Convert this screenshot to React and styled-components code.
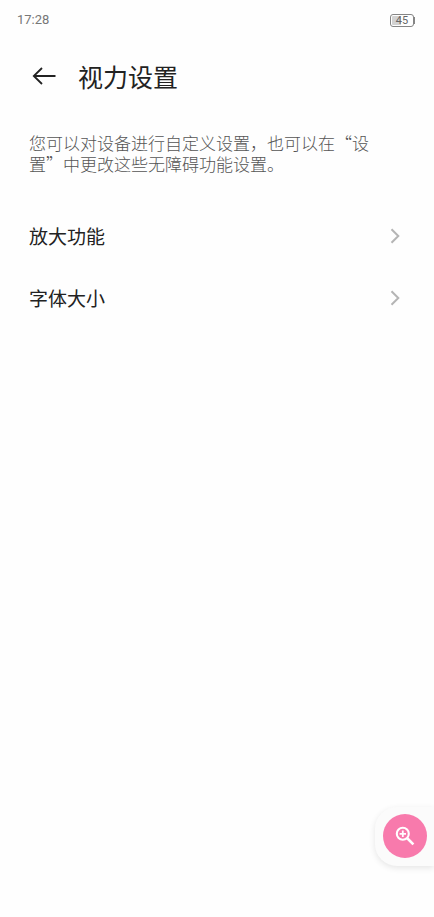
import React from "react";
import styled, {createGlobalStyle} from "styled-components";

const GlobalStyle = createGlobalStyle`
  * {
    box-sizing: border-box;
  }

  body {
    margin: 0;
    background: #fefefe;
    color: #222222;
    font-family: "Noto Sans CJK SC", sans-serif;
  }
`;

const Page = styled.div`
  min-height: 100vh;
  background: #fefefe;
`;

const StatusBar = styled.div`
  display: flex;
  justify-content: space-between;
  align-items: center;
  height: 40px;
  padding: 0 19px 0 17px;
`;

const Time = styled.time`
  font-family: Roboto, sans-serif;
  font-size: 13px;
  line-height: 20px;
  font-weight: 400;
  color: #777777;
`;

const Battery = styled.div`
  display: flex;
  align-items: center;
`;

const BatteryCell = styled.div`
  display: flex;
  justify-content: center;
  align-items: center;
  width: 24px;
  height: 13px;
  border: 1px solid #858585;
  border-radius: 3px;
  background: linear-gradient(90deg, #d2d2d2 45%, transparent 45%) content-box;
  padding: 1px;
  font-family: Roboto, sans-serif;
  font-size: 11px;
  line-height: 11px;
  color: #666666;
`;

const BatteryTip = styled.div`
  width: 1px;
  height: 7px;
  background: #858585;
`;

const Header = styled.header`
  display: flex;
  align-items: center;
  gap: 22px;
  height: 72px;
  padding: 0 32px;
`;

const BackButton = styled.button`
  display: flex;
  padding: 0;
  border: none;
  background: none;
  color: #222222;
  cursor: pointer;
`;

const Title = styled.h1`
  margin: 0;
  font-size: 25px;
  line-height: 36px;
  font-weight: 400;
`;

const Description = styled.p`
  margin: 0;
  padding: 20px 50px 31px 29px;
  font-size: 17px;
  line-height: 21px;
  font-weight: 300;
  color: #555555;
`;

const SettingsList = styled.nav`
  display: flex;
  flex-direction: column;
`;

const SettingsRow = styled.a`
  display: flex;
  justify-content: space-between;
  align-items: center;
  height: 62px;
  padding: 0 34px 0 29px;
  font-size: 19px;
  line-height: 28px;
  color: #222222;
  text-decoration: none;
`;

const ZoomDock = styled.div`
  position: fixed;
  right: 0;
  bottom: 51px;
  padding: 7px 7px 8px 8px;
  border-radius: 22px 0 0 22px;
  background: #fbfbfb;
  box-shadow: 0 2px 6px rgba(0, 0, 0, 0.1);
`;

const ZoomButton = styled.button`
  display: flex;
  justify-content: center;
  align-items: center;
  width: 44px;
  height: 44px;
  padding: 0;
  border: none;
  border-radius: 50%;
  background: #f87aac;
  cursor: pointer;
`;

const BackIcon = () => (
    <svg width="24" height="20" viewBox="0 0 24 20" fill="none" stroke="currentColor" strokeWidth="1.8">
        <path d="M10 2 1.8 10 10 18M2 10H23.5"/>
    </svg>
);

const ChevronIcon = () => (
    <svg width="10" height="16" viewBox="0 0 10 16" fill="none" stroke="#b5b5b5" strokeWidth="2">
        <path d="M1.5 1.2 8.3 8 1.5 14.8"/>
    </svg>
);

const ZoomIcon = () => (
    <svg width="20" height="20" viewBox="0 0 20 20" fill="none" stroke="#ffffff">
        <circle cx="7.8" cy="7.8" r="6" strokeWidth="2.1"/>
        <path d="M7.8 4.6v6.4M4.6 7.8h6.4" strokeWidth="1.8"/>
        <path d="m12 12 6.4 6.4" strokeWidth="2.6"/>
    </svg>
);

const settings = [
    {id: "magnify", label: "放大功能"},
    {id: "font-size", label: "字体大小"},
];

const App = () => {
    return (
        <Page lang="zh-CN">
            <GlobalStyle/>
            <StatusBar>
                <Time>17:28</Time>
                <Battery>
                    <BatteryCell>45</BatteryCell>
                    <BatteryTip/>
                </Battery>
            </StatusBar>
            <Header>
                <BackButton type="button" aria-label="返回">
                    <BackIcon/>
                </BackButton>
                <Title>视力设置</Title>
            </Header>
            <main>
                <Description>
                    您可以对设备进行自定义设置，也可以在“设置”中更改这些无障碍功能设置。
                </Description>
                <SettingsList>
                    {settings.map((item) => (
                        <SettingsRow key={item.id} href={`#${item.id}`}>
                            {item.label}
                            <ChevronIcon/>
                        </SettingsRow>
                    ))}
                </SettingsList>
            </main>
            <ZoomDock>
                <ZoomButton type="button" aria-label="放大">
                    <ZoomIcon/>
                </ZoomButton>
            </ZoomDock>
        </Page>
    );
};

export default App;
